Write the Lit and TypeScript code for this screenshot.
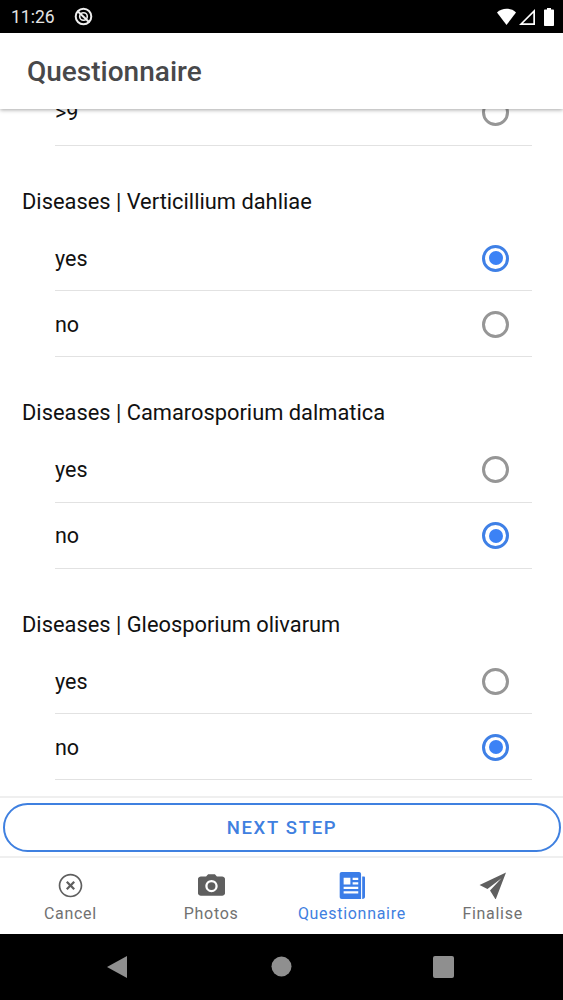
import { LitElement, html, css, svg } from "lit";
import { customElement } from "lit/decorators.js";

const groups = [
  { title: "Diseases | Verticillium dahliae", picked: "yes" },
  { title: "Diseases | Camarosporium dalmatica", picked: "no" },
  { title: "Diseases | Gleosporium olivarum", picked: "no" },
];

const tabs = [
  { label: "Cancel", active: false, icon: svg`<path fill="#5f5f5f" d="M14.590 8 12 10.590 9.410 8 8 9.410 10.590 12 8 14.590 9.410 16 12 13.410 14.590 16 16 14.590 13.410 12 16 9.410 14.590 8zM12 1.500C6.200 1.500 1.500 6.200 1.500 12S6.200 22.500 12 22.500 22.500 17.800 22.500 12 17.800 1.500 12 1.500zm0 19.500c-5 0-9-4-9-9s4-9 9-9 9 4 9 9-4 9-9 9z"/>` },
  { label: "Photos", active: false, icon: svg`<path fill="#5f5f5f" d="M9 2 7.170 4H2.500C1.400 4 0 4.900 0 6v13c0 1.100 1.400 2 2.500 2h19c1.100 0 2.500-.9 2.500-2V6c0-1.100-1.400-2-2.500-2h-4.670L15 2H9zm3 16c-3 0-5.500-2.500-5.500-5.500S9 7 12 7s5.500 2.500 5.500 5.500S15 18 12 18zm0-2a3.500 3.500 0 1 0 0-7 3.500 3.500 0 0 0 0 7z"/>` },
  { label: "Questionnaire", active: true, icon: svg`<path fill="#3b7de8" fill-rule="evenodd" d="M3.300 0h15.400c1 0 1.800.8 1.800 1.800V24H3.300C2.300 24 1.500 23.200 1.500 22.200V1.800C1.500.8 2.300 0 3.300 0zM5 5v6h6V5H5zm8 0v2h5V5h-5zm0 4v2h5V9h-5zM5 13v2h13v-2H5zm0 4v2h13v-2H5z"/><path fill="#3b7de8" d="M21.500 4H23c.6 0 1 .4 1 1v17c0 1-.6 2-2.500 2z"/>` },
  { label: "Finalise", active: false, icon: svg`<path fill="#5f5f5f" d="M24 .5 .5 11.500l7 3.700L20 5.500 9.800 16.500l5 8z"/>` },
];

@customElement("app-root")
export class AppRoot extends LitElement {
  static styles = css`
    :host { display: flex; flex-direction: column; width: 563px; height: 1000px; background: #fff; font-family: Roboto, "Liberation Sans", sans-serif; overflow: hidden; }
    .status { height: 33px; flex: none; background: #000; color: #e4e4e4; display: flex; align-items: center; box-sizing: border-box; padding: 0 9px 0 11px; font-size: 17.500px; }
    .status .time { width: 63px; }
    .status .right { margin-left: auto; display: flex; align-items: center; gap: 3px; }
    .status svg { display: block; }
    .bar { height: 76px; flex: none; background: #fff; display: flex; align-items: center; padding: 0 27px; font-size: 28px; font-weight: 500; color: #48484a; box-shadow: 0 1px 4px rgba(0,0,0,.35); position: relative; z-index: 1; box-sizing: border-box; }
    .scroll { flex: none; height: 687px; overflow: hidden; }
    .inner { margin-top: -29.500px; }
    .title { box-sizing: border-box; height: 79.500px; padding: 41px 22px 0; font-size: 21.850px; line-height: 30px; color: #111; }
    .row { box-sizing: border-box; height: 66px; padding-top: 1px; margin: 0 31.500px 0 55px; border-bottom: 1px solid #e2e2e2; display: flex; align-items: center; justify-content: space-between; font-size: 21.500px; color: #111; }
    .radio { box-sizing: border-box; width: 27px; height: 27px; border: 3px solid #969696; border-radius: 50%; margin-right: 22.500px; display: flex; align-items: center; justify-content: center; }
    .radio.on { border-color: #3f80e6; }
    .radio.on::after { content: ""; width: 14px; height: 14px; border-radius: 50%; background: #3b82f6; }
    .foot { flex: none; height: 62px; box-sizing: border-box; border-top: 2px solid #efefef; border-bottom: 2px solid #efefef; padding: 5px 2px 4px 3px; display: flex; }
    .btn { flex: 1; box-sizing: border-box; border: 2.500px solid #3f80e0; border-radius: 25px; display: flex; align-items: center; justify-content: center; color: #3f80e0; font-size: 18.500px; font-weight: 500; letter-spacing: 1.700px; }
    .tabs { flex: none; height: 76px; display: grid; grid-template-columns: repeat(4, 1fr); background: #fff; }
    .tab { display: flex; flex-direction: column; align-items: center; color: #717171; font-size: 16px; letter-spacing: .7px; }
    .tab.active { color: #3f80e0; }
    .icon { height: 27px; margin-top: 14px; margin-bottom: 5px; display: block; }
    .lbl { line-height: 19px; }
    .nav { flex: 1; background: #000; display: flex; align-items: center; justify-content: center; position: relative; }
    .nav svg { display: block; }
  `;

  render() {
    const rows = (picked: string) => ["yes", "no"].map((v) => html`
      <div class="row"><span>${v}</span><span class="radio ${picked === v ? "on" : ""}"></span></div>`);
    return html`
      <div class="status">
        <span class="time">11:26</span>
        <svg width="19" height="19" viewBox="0 0 19 19" fill="none" stroke="#eee"><circle cx="9.500" cy="9.500" r="7.800" stroke-width="2"/><circle cx="9.500" cy="9.500" r="3.800" stroke-width="1.600"/><path d="M4 4.500 15.500 15.500" stroke-width="2"/></svg>
        <div class="right">
          <svg width="19" height="18" viewBox="0 0 19 18"><path fill="#fff" d="M0 4.500C2.500 2 6 .8 9.500 .8S16.500 2 19 4.500L9.500 17z"/></svg>
          <svg width="16" height="18" viewBox="0 0 16 18"><path fill="#fff" fill-rule="evenodd" d="M16 1v16H0zM14.300 5 4 15.300h10.300z"/></svg>
          <svg width="10" height="18" viewBox="0 0 10 18" style="margin-left:6px"><path fill="#fff" d="M3 0h4v1.500h2c.6 0 1 .4 1 1V17c0 .6-.4 1-1 1H1c-.6 0-1-.4-1-1V2.500c0-.6.4-1 1-1h2z"/></svg>
        </div>
      </div>
      <div class="bar">Questionnaire</div>
      <div class="scroll">
        <div class="inner">
          <div class="row"><span>&gt;9</span><span class="radio"></span></div>
          ${groups.map((g) => html`<div class="title">${g.title}</div>${rows(g.picked)}`)}
          <div class="title"></div>
        </div>
      </div>
      <div class="foot"><div class="btn">NEXT STEP</div></div>
      <div class="tabs">
        ${tabs.map((t) => html`
          <div class="tab ${t.active ? "active" : ""}">
            <svg class="icon" width="27" height="27" viewBox="0 0 24 24">${t.icon}</svg>
            <span class="lbl">${t.label}</span>
          </div>`)}
      </div>
      <div class="nav">
        <svg width="563" height="66" viewBox="0 0 563 66">
          <path fill="#8f8f8f" d="M127 22v22L107 33z"/>
          <circle cx="281.500" cy="32.500" r="10" fill="#8f8f8f"/>
          <rect x="433" y="22" width="21" height="22" rx="2" fill="#8f8f8f"/>
        </svg>
      </div>
    `;
  }
}
